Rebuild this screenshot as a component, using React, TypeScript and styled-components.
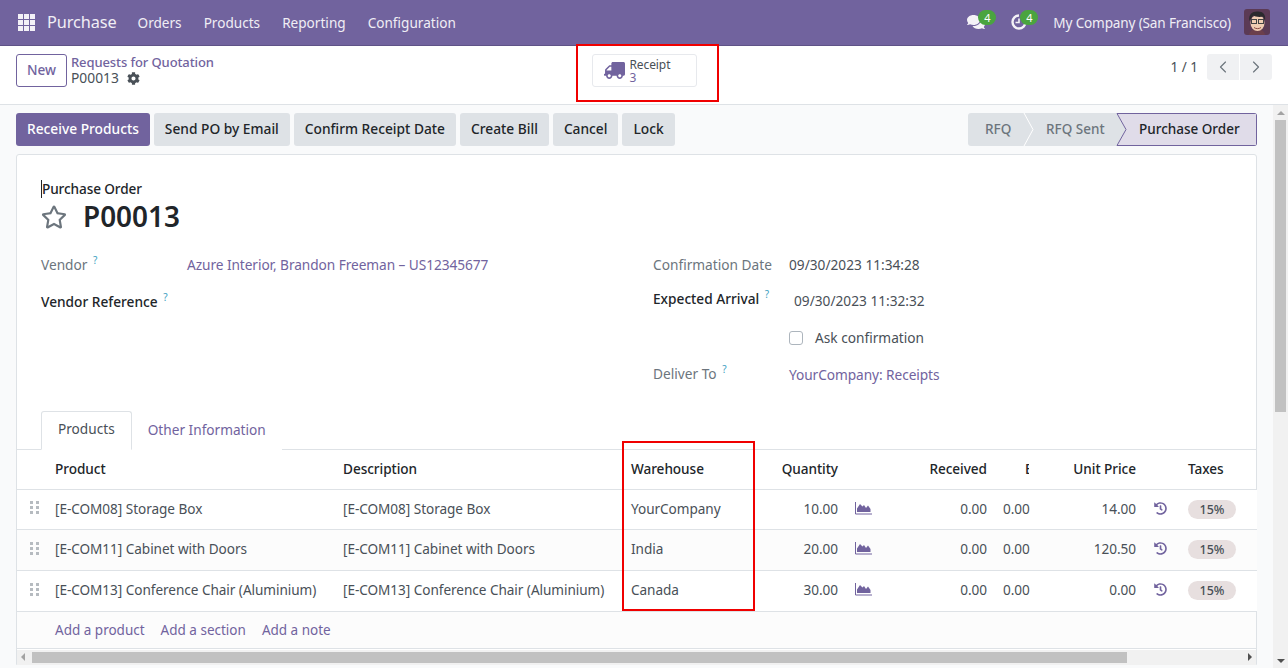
import styled, { createGlobalStyle } from "styled-components";
import { FaCog, FaComments, FaHistory, FaTruck, FaRegStar } from "react-icons/fa";
import { ChevronLeft, ChevronRight } from "lucide-react";

const GlobalStyle = createGlobalStyle`
  html, body {
    margin: 0;
    padding: 0;
    height: 668px;
    overflow: hidden;
    background: #f9fafb;
  }
  * { box-sizing: border-box; }
  body {
    font-family: "Noto Sans", "Open Sans", sans-serif;
    font-size: 14px;
    color: #495057;
  }
`;

const PURPLE = "#71639e";

const Page = styled.div`
  position: relative;
  width: 1288px;
  height: 668px;
  overflow: hidden;
  display: flex;
  flex-direction: column;
`;

const NavBar = styled.div`
  height: 46px;
  flex-shrink: 0;
  background: ${PURPLE};
  border-bottom: 1px solid #5f5387;
  display: flex;
  align-items: center;
  padding: 0 18px 1px 18px;
  color: #f0eef5;
`;

const AppsGrid = styled.div`
  width: 17px;
  height: 17px;
  display: grid;
  grid-template-columns: repeat(3, 5px);
  grid-auto-rows: 5px;
  gap: 1px;
  margin-right: 12px;
  i { background: #f3f1f7; display: block; }
`;

const Brand = styled.div`
  font-size: 16.3px;
  letter-spacing: -0.1px;
  margin-right: 21px;
`;

const NavMenu = styled.div`
  display: flex;
  gap: 22px;
  font-size: 13.6px;
`;

const NavRight = styled.div`
  margin-left: auto;
  display: flex;
  align-items: center;
`;

const NavIcon = styled.div<{ $gap: number }>`
  position: relative;
  width: 20px;
  height: 20px;
  display: flex;
  align-items: center;
  justify-content: center;
  margin-right: ${(p) => p.$gap}px;
`;

const Badge = styled.span<{ $left: number }>`
  position: absolute;
  top: -2px;
  left: ${(p) => p.$left}px;
  width: 18px;
  height: 15px;
  border-radius: 8px;
  background: #4aa43f;
  color: #fff;
  font-size: 11px;
  line-height: 15px;
  text-align: center;
`;

const CompanyName = styled.div`
  font-size: 13.6px;
  letter-spacing: -0.17px;
  margin-right: 13px;
`;

const ControlPanel = styled.div`
  height: 59px;
  flex-shrink: 0;
  background: #fff;
  border-bottom: 1px solid #dee2e6;
  display: grid;
  grid-template-columns: 1fr auto 1fr;
  padding: 8px 16px 0;
`;

const PanelLeft = styled.div`
  display: flex;
  align-items: flex-start;
  gap: 4px;
`;

const NewButton = styled.button`
  height: 33px;
  width: 51px;
  padding: 0 0 2px;
  border: 1px solid ${PURPLE};
  border-radius: 3px;
  background: #fff;
  color: ${PURPLE};
  font: 500 13.6px "Noto Sans", sans-serif;
`;

const Breadcrumb = styled.div`
  display: flex;
  flex-direction: column;
  font-size: 13px;
  line-height: 16px;
`;

const BreadLink = styled.span`
  color: ${PURPLE};
  font-weight: 500;
  letter-spacing: -0.1px;
`;

const BreadCurrent = styled.span`
  display: flex;
  align-items: center;
  gap: 8px;
  font-size: 13.8px;
  color: #495057;
`;

const PanelCenter = styled.div`
  display: flex;
  justify-content: center;
`;

const StatButton = styled.div`
  width: 105px;
  height: 33px;
  border: 1px solid #e7e9ed;
  border-radius: 3px;
  background: #fff;
  display: flex;
  align-items: center;
  padding-left: 11px;
  gap: 5px;
`;

const StatText = styled.div`
  display: flex;
  flex-direction: column;
  font-size: 12px;
  line-height: 13px;
  color: #495057;
  letter-spacing: -0.1px;
  b { font-weight: 400; color: ${PURPLE}; }
`;

const PanelRight = styled.div`
  display: flex;
  justify-content: flex-end;
  align-items: flex-start;
`;

const PagerText = styled.span`
  font-size: 13.5px;
  line-height: 26px;
  margin-right: 9px;
  color: #495057;
`;

const PagerButton = styled.div<{ $left?: boolean }>`
  width: 32px;
  height: 26px;
  background: #f0f1f3;
  color: #6c757d;
  display: flex;
  align-items: center;
  justify-content: center;
  border-radius: ${(p) => (p.$left ? "3px 0 0 3px" : "0 3px 3px 0")};
  margin-right: ${(p) => (p.$left ? "1px" : "0")};
`;

const Body = styled.div`
  flex: 1;
  display: flex;
  min-height: 0;
`;

const Scroller = styled.div`
  flex: 1;
  min-width: 0;
  padding: 8px 16px 0;
  overflow: hidden;
`;

const VScroll = styled.div`
  width: 15px;
  flex-shrink: 0;
  background: #f1f1f1;
  display: flex;
  flex-direction: column;
  align-items: center;
`;

const ArrowUp = styled.div`
  width: 0;
  height: 0;
  margin: 6px 0 5px;
  border: 4px solid transparent;
  border-top: 0;
  border-bottom: 4px solid #a3a3a3;
`;

const ArrowDown = styled.div`
  width: 0;
  height: 0;
  margin-top: auto;
  margin-bottom: 5px;
  border: 4px solid transparent;
  border-bottom: 0;
  border-top: 4px solid #505050;
`;

const VThumb = styled.div`
  width: 11px;
  height: 292px;
  background: #c1c1c1;
`;

const ActionRow = styled.div`
  display: flex;
  align-items: flex-start;
  height: 41px;
`;

const ActionButton = styled.button<{ $primary?: boolean }>`
  height: 33px;
  padding: 0 11px 2px;
  margin-right: 4px;
  border: none;
  border-radius: 3px;
  background: ${(p) => (p.$primary ? PURPLE : "#dee2e6")};
  color: ${(p) => (p.$primary ? "#fff" : "#212529")};
  font: 500 13.75px "Noto Sans", sans-serif;
  white-space: nowrap;
`;

const StatusBar = styled.div`
  margin-left: auto;
  display: flex;
  height: 33px;
  width: 289px;
  border-radius: 3px;
  overflow: hidden;
`;

const StatusSvg = styled.svg`
  display: block;
`;

const Sheet = styled.div`
  width: 1241px;
  height: 511px;
  background: #fff;
  border: 1px solid #dee2e6;
  border-radius: 3px 3px 0 0;
  display: flex;
  flex-direction: column;
`;

const SheetHead = styled.div`
  padding: 25px 24px 0;
  flex-shrink: 0;
`;

const KindLabel = styled.div`
  font-size: 13.6px;
  line-height: 18px;
  font-weight: 500;
  color: #212529;
  border-left: 1px solid #212529;
  letter-spacing: -0.1px;
`;

const TitleRow = styled.div`
  display: flex;
  align-items: center;
  gap: 16px;
  height: 39px;
  margin-top: -1px;
  color: #6c757d;
`;

const Title = styled.div`
  font-size: 27.9px;
  font-weight: 600;
  padding-bottom: 2px;
  color: #212529;
`;

const Groups = styled.div`
  display: grid;
  grid-template-columns: 612px 1fr;
  padding: 19px 24px 0;
  height: 175px;
  flex-shrink: 0;
`;

const Group = styled.div`
  display: flex;
  flex-direction: column;
`;

const Field = styled.div<{ $h: number }>`
  display: flex;
  height: ${(p) => p.$h}px;
  align-items: flex-start;
`;

const Label = styled.div<{ $w: number; $strong?: boolean; $up?: number }>`
  width: ${(p) => p.$w}px;
  flex-shrink: 0;
  margin-top: ${(p) => -(p.$up ?? 0)}px;
  font-size: 13.7px;
  line-height: 20px;
  font-weight: ${(p) => (p.$strong ? 500 : 400)};
  color: ${(p) => (p.$strong ? "#212529" : "#6c757d")};
  sup {
    font-size: 10px;
    line-height: 0;
    color: #3e9fc1;
    margin-left: 2px;
    font-weight: 400;
  }
`;

const Value = styled.div<{ $link?: boolean; $pad?: number }>`
  font-size: 13.7px;
  line-height: 20px;
  padding-left: ${(p) => p.$pad ?? 0}px;
  letter-spacing: ${(p) => (p.$link ? "-0.07px" : "0")};
  color: ${(p) => (p.$link ? PURPLE : "#495057")};
`;

const CheckBox = styled.span`
  display: inline-block;
  width: 14px;
  height: 14px;
  border: 1px solid #adb5bd;
  border-radius: 3px;
  background: #fff;
  margin-right: 12px;
  vertical-align: -2px;
`;

const Tabs = styled.div`
  display: flex;
  height: 39px;
  padding-left: 24px;
  border-bottom: 1px solid #dee2e6;
  font-size: 13.65px;
  flex-shrink: 0;
`;

const Tab = styled.div<{ $active?: boolean }>`
  height: 39px;
  line-height: ${(p) => (p.$active ? 34 : 38)}px;
  padding: 0 16px;
  color: ${(p) => (p.$active ? "#495057" : PURPLE)};
  background: #fff;
  ${(p) => p.$active && "border: 1px solid #dee2e6; border-bottom-color: #fff; border-radius: 3px 3px 0 0;"}
`;

const Table = styled.table`
  width: 1240px;
  border-collapse: collapse;
  table-layout: fixed;
  font-size: 13.6px;
  letter-spacing: -0.05px;
  flex-shrink: 0;
`;

const Th = styled.th<{ $right?: boolean }>`
  height: 39px;
  padding: 0 8px 1px;
  font-weight: 500;
  color: #212529;
  border-bottom: 1px solid #dee2e6;
  text-align: ${(p) => (p.$right ? "right" : "left")};
  overflow: hidden;
  white-space: nowrap;
`;

const ClippedHead = styled.div`
  overflow: hidden;
  padding-left: 22px;
  text-align: left;
`;

const Tr = styled.tr<{ $odd?: boolean }>`
  background: ${(p) => (p.$odd ? "#fcfcfc" : "#fff")};
`;

const Td = styled.td<{ $right?: boolean; $h?: number }>`
  height: ${(p) => p.$h ?? 40}px;
  padding: 0 8px 2px;
  border-bottom: 1px solid #dee2e6;
  text-align: ${(p) => (p.$right ? "right" : "left")};
  white-space: nowrap;
  overflow: hidden;
  color: #495057;
`;

const Handle = styled.div`
  width: 9px;
  height: 14px;
  margin-left: 5px;
  display: grid;
  grid-template-columns: 3px 3px;
  grid-auto-rows: 3px;
  gap: 2px 3px;
  i { display: block; background: #b6bbc0; }
`;

const IconCell = styled.span<{ $indent: number }>`
  color: ${PURPLE};
  display: inline-flex;
  vertical-align: middle;
  margin-left: ${(p) => p.$indent}px;
  margin-bottom: 3px;
`;

const TaxPill = styled.span`
  display: inline-block;
  width: 48px;
  height: 19px;
  margin-top: 2px;
  border-radius: 10px;
  background: #e7dfdf;
  color: #495057;
  font-size: 12.5px;
  font-weight: 500;
  line-height: 19px;
  text-align: center;
`;

const AddLine = styled.div`
  height: 37px;
  background: #fcfcfc;
  border-bottom: 1px solid #dee2e6;
  display: flex;
  align-items: center;
  gap: 16px;
  padding-left: 38px;
  color: ${PURPLE};
  font-size: 13.5px;
  flex-shrink: 0;
`;

const HScroll = styled.div`
  height: 15px;
  flex-shrink: 0;
  margin-top: 1px;
  background: #f1f1f1;
  display: flex;
  align-items: center;
  padding: 0 4px;
`;

const HArrow = styled.div<{ $left?: boolean }>`
  width: 0;
  height: 0;
  border: 4px solid transparent;
  ${(p) => (p.$left ? "border-left: 0; border-right: 4px solid #a3a3a3;" : "border-right: 0; border-left: 4px solid #505050; margin-left: auto;")}
`;

const HThumb = styled.div`
  width: 1095px;
  height: 11px;
  margin-left: 7px;
  background: #c1c1c1;
`;

const RedBox = styled.div<{ $x: number; $y: number; $w: number; $h: number }>`
  position: absolute;
  left: ${(p) => p.$x}px;
  top: ${(p) => p.$y}px;
  width: ${(p) => p.$w}px;
  height: ${(p) => p.$h}px;
  border: 2px solid #f00000;
  pointer-events: none;
`;

const ForecastIcon = () => (
  <svg width="17" height="14" viewBox="0 0 17 14">
    <path d="M.5 1v12H17" fill="none" stroke={PURPLE} strokeWidth="1" />
    <path d="M2 11V7.5L5 3l2.5 2.5L9 4l2 3 2-2.5L15.5 8v3z" fill={PURPLE} />
  </svg>
);

const Avatar = () => (
  <svg width="26" height="26" viewBox="0 0 26 26" style={{ borderRadius: 3 }}>
    <rect width="26" height="26" fill="#5b3a55" />
    <path d="M5 26c1-5 4-6 8-6s7 1 8 6z" fill="#6b3f4c" />
    <ellipse cx="13.5" cy="14" rx="7" ry="8" fill="#f1cdb3" />
    <path d="M5.5 12C4 5 9 2 14 2.5c5 0 8 3 7 9l-2-4c-4 1-8 0-10-1-1 2-2 3-3.5 5.5z" fill="#2b2a2e" />
    <rect x="7.5" y="10.5" width="5" height="4" fill="none" stroke="#444" strokeWidth="1" />
    <rect x="14.5" y="10.5" width="5" height="4" fill="none" stroke="#444" strokeWidth="1" />
    <path d="M10 18.5c2 1.5 5 1.5 7 0" fill="none" stroke="#8d4a44" strokeWidth="1" />
  </svg>
);

const rows = [
  { name: "[E-COM08] Storage Box", house: "YourCompany", qty: "10.00", price: "14.00", h: 40 },
  { name: "[E-COM11] Cabinet with Doors", house: "India", qty: "20.00", price: "120.50", h: 41, odd: true },
  { name: "[E-COM13] Conference Chair (Aluminium)", house: "Canada", qty: "30.00", price: "0.00", h: 41 },
];

export default function App() {
  return (
    <Page>
      <GlobalStyle />
      <NavBar>
        <AppsGrid>
          {Array.from({ length: 9 }).map((_, i) => (
            <i key={i} />
          ))}
        </AppsGrid>
        <Brand>Purchase</Brand>
        <NavMenu>
          <span>Orders</span>
          <span>Products</span>
          <span>Reporting</span>
          <span>Configuration</span>
        </NavMenu>
        <NavRight>
          <NavIcon $gap={23}>
            <FaComments size={18} color="#f4f2f7" />
            <Badge $left={12}>4</Badge>
          </NavIcon>
          <NavIcon $gap={24}>
            <svg width="18" height="18" viewBox="0 0 18 18">
              <path d="M9 2.5a6.5 6.5 0 1 0 6.5 6.5" fill="none" stroke="#f4f2f7" strokeWidth="2.4" />
              <path d="M9 5.5V9.5H5.5" fill="none" stroke="#f4f2f7" strokeWidth="1.6" />
            </svg>
            <Badge $left={11}>4</Badge>
          </NavIcon>
          <CompanyName>My Company (San Francisco)</CompanyName>
          <Avatar />
        </NavRight>
      </NavBar>

      <ControlPanel>
        <PanelLeft>
          <NewButton>New</NewButton>
          <Breadcrumb>
            <BreadLink>Requests for Quotation</BreadLink>
            <BreadCurrent>
              P00013 <FaCog size={13} color="#495057" />
            </BreadCurrent>
          </Breadcrumb>
        </PanelLeft>
        <PanelCenter>
          <StatButton>
            <FaTruck size={21} color={PURPLE} style={{ transform: "scaleX(-1)" }} />
            <StatText>
              <span>Receipt</span>
              <b>3</b>
            </StatText>
          </StatButton>
        </PanelCenter>
        <PanelRight>
          <PagerText>1 / 1</PagerText>
          <PagerButton $left>
            <ChevronLeft size={20} strokeWidth={1.4} />
          </PagerButton>
          <PagerButton>
            <ChevronRight size={20} strokeWidth={1.4} />
          </PagerButton>
        </PanelRight>
      </ControlPanel>

      <Body>
        <Scroller>
          <ActionRow>
            <ActionButton $primary>Receive Products</ActionButton>
            <ActionButton>Send PO by Email</ActionButton>
            <ActionButton>Confirm Receipt Date</ActionButton>
            <ActionButton>Create Bill</ActionButton>
            <ActionButton>Cancel</ActionButton>
            <ActionButton>Lock</ActionButton>
            <StatusBar>
              <StatusSvg width="289" height="33" viewBox="0 0 289 33">
                <rect width="289" height="33" fill="#dee2e6" />
                <path d="M56 0l9 16.5L56 33" fill="none" stroke="#fff" strokeWidth="1" />
                <path d="M149 .5H288.5V32.5H149L158 16.5z" fill="#e0dce9" stroke={PURPLE} strokeWidth="1" />
                <text x="17" y="21" fontSize="13.6" fontWeight="500" fill="#6c757d">RFQ</text>
                <text x="78" y="21" fontSize="13.5" fontWeight="500" fill="#6c757d">RFQ Sent</text>
                <text x="171" y="21" fontSize="13.5" fontWeight="500" fill="#212529">Purchase Order</text>
              </StatusSvg>
            </StatusBar>
          </ActionRow>

          <Sheet>
            <SheetHead>
              <KindLabel>Purchase Order</KindLabel>
              <TitleRow>
                <FaRegStar size={26} />
                <Title>P00013</Title>
              </TitleRow>
            </SheetHead>
            <Groups>
              <Group>
                <Field $h={37}>
                  <Label $w={146}>
                    Vendor <sup>?</sup>
                  </Label>
                  <Value $link>Azure Interior, Brandon Freeman – US12345677</Value>
                </Field>
                <Field $h={37}>
                  <Label $w={146} $strong>
                    Vendor Reference <sup>?</sup>
                  </Label>
                </Field>
              </Group>
              <Group>
                <Field $h={36}>
                  <Label $w={136}>Confirmation Date</Label>
                  <Value>09/30/2023 11:34:28</Value>
                </Field>
                <Field $h={37}>
                  <Label $w={136} $strong $up={2}>
                    Expected Arrival <sup>?</sup>
                  </Label>
                  <Value $pad={5}>09/30/2023 11:32:32</Value>
                </Field>
                <Field $h={37}>
                  <Label $w={136} />
                  <Value>
                    <CheckBox />
                    Ask confirmation
                  </Value>
                </Field>
                <Field $h={37}>
                  <Label $w={136} $up={1}>
                    Deliver To <sup>?</sup>
                  </Label>
                  <Value $link>YourCompany: Receipts</Value>
                </Field>
              </Group>
            </Groups>
            <Tabs>
              <Tab $active>Products</Tab>
              <Tab>Other Information</Tab>
            </Tabs>
            <Table>
              <colgroup>
                <col style={{ width: 30 }} />
                <col style={{ width: 288 }} />
                <col style={{ width: 288 }} />
                <col style={{ width: 124 }} />
                <col style={{ width: 99 }} />
                <col style={{ width: 34 }} />
                <col style={{ width: 115 }} />
                <col style={{ width: 42 }} />
                <col style={{ width: 107 }} />
                <col style={{ width: 36 }} />
                <col style={{ width: 77 }} />
              </colgroup>
              <thead>
                <tr>
                  <Th />
                  <Th>Product</Th>
                  <Th>Description</Th>
                  <Th>Warehouse</Th>
                  <Th $right>Quantity</Th>
                  <Th />
                  <Th $right>Received</Th>
                  <Th>
                    <ClippedHead>Billed</ClippedHead>
                  </Th>
                  <Th $right>Unit Price</Th>
                  <Th />
                  <Th>Taxes</Th>
                </tr>
              </thead>
              <tbody>
                {rows.map((r) => (
                  <Tr key={r.name} $odd={r.odd}>
                    <Td $h={r.h}>
                      <Handle>
                        {Array.from({ length: 6 }).map((_, i) => (
                          <i key={i} />
                        ))}
                      </Handle>
                    </Td>
                    <Td $h={r.h}>{r.name}</Td>
                    <Td $h={r.h}>{r.name}</Td>
                    <Td $h={r.h}>{r.house}</Td>
                    <Td $h={r.h} $right>{r.qty}</Td>
                    <Td $h={r.h}>
                      <IconCell $indent={1}>
                        <ForecastIcon />
                      </IconCell>
                    </Td>
                    <Td $h={r.h} $right>0.00</Td>
                    <Td $h={r.h} $right>0.00</Td>
                    <Td $h={r.h} $right>{r.price}</Td>
                    <Td $h={r.h}>
                      <IconCell $indent={2}>
                        <FaHistory size={13} />
                      </IconCell>
                    </Td>
                    <Td $h={r.h}>
                      <TaxPill>15%</TaxPill>
                    </Td>
                  </Tr>
                ))}
              </tbody>
            </Table>
            <AddLine>
              <span>Add a product</span>
              <span>Add a section</span>
              <span>Add a note</span>
            </AddLine>
            <HScroll>
              <HArrow $left />
              <HThumb />
              <HArrow />
            </HScroll>
          </Sheet>
        </Scroller>
        <VScroll>
          <ArrowUp />
          <VThumb />
          <ArrowDown />
        </VScroll>
      </Body>

      <RedBox $x={576} $y={44} $w={143} $h={58} />
      <RedBox $x={622} $y={441} $w={133} $h={170} />
    </Page>
  );
}
